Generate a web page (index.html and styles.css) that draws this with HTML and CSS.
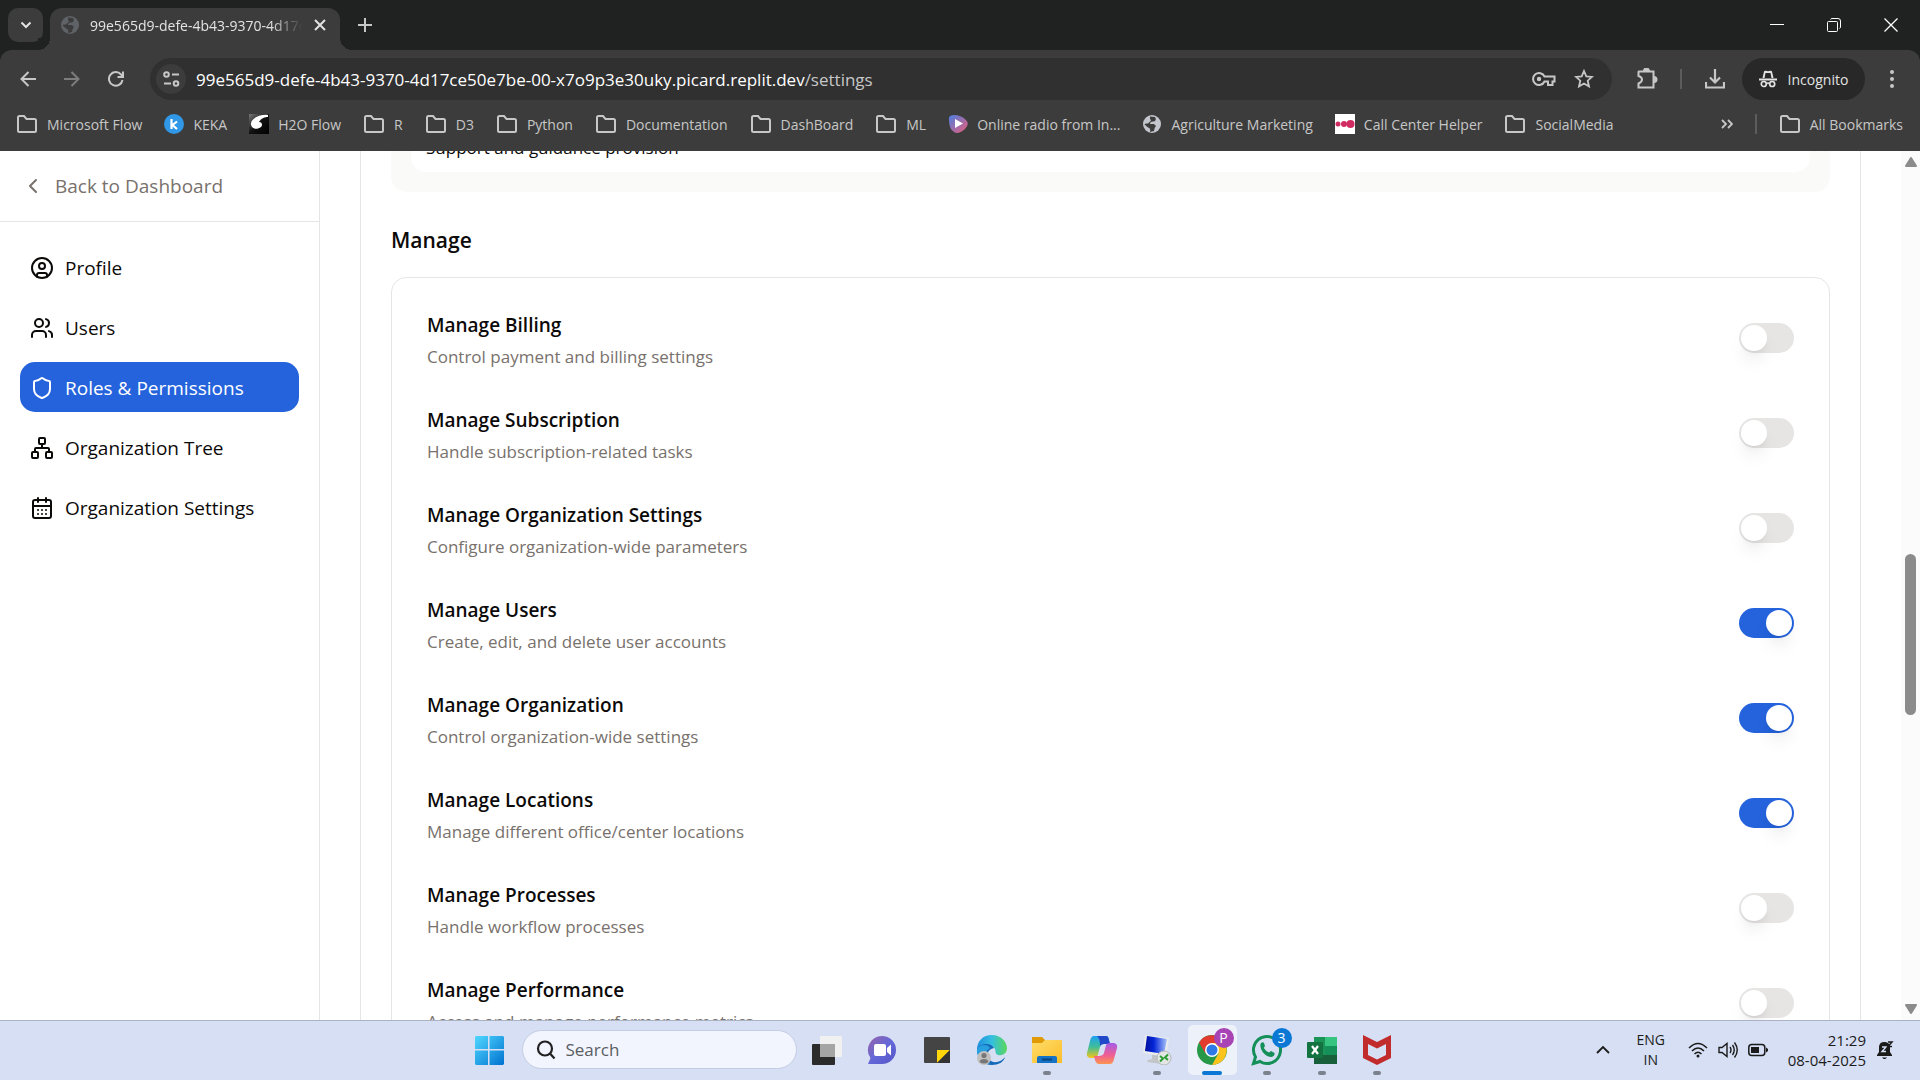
FILE: index.html
```html
<!DOCTYPE html>
<html lang="en">
<head>
<meta charset="utf-8">
<title>Settings</title>
<link rel="stylesheet" href="styles.css">
</head>
<body>
<svg class="defs" aria-hidden="true">
  <defs>
    <symbol id="folder" viewBox="0 0 22 20"><path d="M2 3.500Q2 2 3.500 2H8l2.500 3H18.500Q20 5 20 6.500V16.500Q20 18 18.500 18H3.500Q2 18 2 16.500Z" fill="none" stroke="currentColor" stroke-width="2"/></symbol>
    <symbol id="globe" viewBox="0 0 20 20"><circle cx="10" cy="10" r="9" fill="currentColor"/><path d="M8 2.500L13 3Q15 6 12 7.500Q8 7 8 10H12L14 12Q12 14 12 17L8 18Q9 14 6 13.500L2.500 10.500Q3 9 6 9.500L7.500 8Q10 6.500 8 5Z" fill="var(--land)"/></symbol>
    <linearGradient id="win" x1="0" y1="0" x2="1" y2="1"><stop offset="0" stop-color="#4fd8ff"/><stop offset="1" stop-color="#0072d0"/></linearGradient>
    <linearGradient id="radio" x1="0" y1="0" x2="1" y2="1"><stop offset="0" stop-color="#4a7ee0"/><stop offset="1" stop-color="#ee5d78"/></linearGradient>
    <linearGradient id="chat" x1="0" y1="0" x2="1" y2="1"><stop offset="0" stop-color="#9a63a8"/><stop offset=".5" stop-color="#6468d8"/><stop offset="1" stop-color="#5656c8"/></linearGradient>
    <linearGradient id="edgeTop" x1="0" y1="0" x2="1" y2="0"><stop offset="0" stop-color="#1e8fdc"/><stop offset=".5" stop-color="#35bfe0"/><stop offset="1" stop-color="#58d858"/></linearGradient>
    <linearGradient id="fold" x1="0" y1="0" x2="1" y2="1"><stop offset="0" stop-color="#ffdd6b"/><stop offset="1" stop-color="#fbbd28"/></linearGradient>
    <linearGradient id="copA" x1="0" y1="0" x2="0" y2="1"><stop offset="0" stop-color="#1fa0f0"/><stop offset=".5" stop-color="#3fbf98"/><stop offset="1" stop-color="#f5c518"/></linearGradient>
    <linearGradient id="copB" x1="0" y1="0" x2="0" y2="1"><stop offset="0" stop-color="#a45be8"/><stop offset=".6" stop-color="#f2608f"/><stop offset="1" stop-color="#fb9550"/></linearGradient>
    <linearGradient id="screen" x1="0" y1="0" x2="1" y2="0"><stop offset="0" stop-color="#0010a0"/><stop offset=".4" stop-color="#0526d8"/><stop offset="1" stop-color="#a9c4fb"/></linearGradient>
    <linearGradient id="swirl" x1="0" y1="0" x2="1" y2="1"><stop offset="0" stop-color="#777"/><stop offset=".5" stop-color="#111"/><stop offset="1" stop-color="#000"/></linearGradient>
  </defs>
</svg>

<header class="browser">
  <div class="tabstrip">
    <button class="tab-search" aria-label="Search tabs"><svg width="12" height="8" viewBox="0 0 12 8"><path d="M1.500 1.500L6 6L10.500 1.500" fill="none" stroke="currentColor" stroke-width="2"/></svg></button>
    <div class="tab">
      <svg class="tab-globe" width="20" height="20"><use href="#globe"/></svg>
      <span class="tab-title">99e565d9-defe-4b43-9370-4d17ce50e7be</span>
      <button class="tab-close" aria-label="Close tab"><svg width="12" height="12" viewBox="0 0 12 12"><path d="M1 1L11 11M11 1L1 11" stroke="currentColor" stroke-width="2"/></svg></button>
    </div>
    <button class="new-tab" aria-label="New tab"><svg width="14" height="14" viewBox="0 0 14 14"><path d="M7 0V14M0 7H14" stroke="currentColor" stroke-width="2"/></svg></button>
    <div class="window-controls">
      <button aria-label="Minimize"><svg width="14" height="14" viewBox="0 0 14 14"><path d="M0 6.500H14" stroke="currentColor"/></svg></button>
      <button aria-label="Restore"><svg width="14" height="14" viewBox="0 0 14 14" fill="none" stroke="currentColor"><rect x=".5" y="3.500" width="10" height="10" rx="1"/><path d="M3.500 1.500Q4 .5 5 .5H11Q13.500 .5 13.500 3V9Q13.500 10 12.500 10.500"/></svg></button>
      <button aria-label="Close"><svg width="14" height="14" viewBox="0 0 14 14"><path d="M.5 .5L13.500 13.500M13.500 .5L.5 13.500" stroke="currentColor" stroke-width="1.300"/></svg></button>
    </div>
  </div>

  <div class="toolbar">
    <div class="nav-buttons">
      <button aria-label="Back"><svg width="16" height="16" viewBox="0 0 16 16" fill="none" stroke="currentColor" stroke-width="2"><path d="M16 8H2M8.500 1L1.500 8L8.500 15"/></svg></button>
      <button class="dim" aria-label="Forward"><svg width="16" height="16" viewBox="0 0 16 16" fill="none" stroke="currentColor" stroke-width="2"><path d="M0 8H14M7.500 1L14.500 8L7.500 15"/></svg></button>
      <button aria-label="Reload"><svg width="16" height="16" viewBox="0 0 16 16" fill="none" stroke="currentColor" stroke-width="2"><path d="M14.500 9A6.800 6.800 0 1 1 13 3.500L15 6M15 .5V6H9.500"/></svg></button>
    </div>
    <div class="omnibox">
      <button class="site-info" aria-label="Site information"><svg width="17" height="16" viewBox="0 0 17 16" fill="none" stroke="currentColor" stroke-width="2"><circle cx="3.500" cy="3.500" r="2.300"/><path d="M9 3.500H16M1 12.500H8"/><circle cx="13" cy="12.500" r="2.300"/></svg></button>
      <div class="url"><span class="host">99e565d9-defe-4b43-9370-4d17ce50e7be-00-x7o9p3e30uky.picard.replit.dev</span>/settings</div>
      <button aria-label="Passwords"><svg width="24" height="16" viewBox="0 0 24 16" fill="none" stroke="currentColor" stroke-width="2"><path d="M12.500 5.500A6 6 0 1 0 12.500 10.500H16V14H20.500V10.500H22.500V5.500Z"/><circle cx="7" cy="8" r="2.200" fill="currentColor" stroke="none"/></svg></button>
      <button aria-label="Bookmark this page"><svg width="20" height="20" viewBox="0 0 20 20" fill="none" stroke="currentColor" stroke-width="1.800"><path d="M10 2L12.300 7.400L18 7.900L13.700 11.700L15 17.500L10 14.500L5 17.500L6.300 11.700L2 7.900L7.700 7.400Z"/></svg></button>
    </div>
    <div class="actions">
      <button aria-label="Extensions"><svg width="22" height="22" viewBox="0 0 22 22" fill="none" stroke="currentColor" stroke-width="2"><path d="M3 3.500H17.500V19.500H2.500V15.500Q6 14 6 11.500T2.500 8V4Z"/><path d="M8 3A2.500 2.500 0 0 1 13 3M18 9A2.500 2.500 0 0 1 18 14" fill="currentColor"/></svg></button>
      <span class="divider"></span>
      <button aria-label="Downloads"><svg width="20" height="20" viewBox="0 0 20 20" fill="none" stroke="currentColor" stroke-width="2.200"><path d="M10 0V13M5 8.500L10 13.500L15 8.500M1 13V18.500H19V13"/></svg></button>
      <button class="incognito"><svg width="18" height="18" viewBox="0 0 18 18"><path d="M0 8.500H18V10.500H0ZM3.500 8L5 1.500Q5.500 .3 7 .8L9 1.300L11 .8Q12.500 .3 13 1.500L14.500 8H12.500L11.500 3H6.500L5.500 8Z" fill="currentColor"/><g fill="none" stroke="currentColor" stroke-width="1.700"><circle cx="4.800" cy="14" r="2.500"/><circle cx="13.200" cy="14" r="2.500"/><path d="M7.500 13.500Q9 12.500 10.500 13.500"/></g></svg>Incognito</button>
      <button aria-label="Menu"><svg width="6" height="20" viewBox="0 0 6 20" fill="currentColor"><circle cx="3" cy="3" r="2"/><circle cx="3" cy="10" r="2"/><circle cx="3" cy="17" r="2"/></svg></button>
    </div>
  </div>

  <nav class="bookmarks" aria-label="Bookmarks">
    <a href="#"><svg width="22" height="20"><use href="#folder"/></svg>Microsoft Flow</a>
    <a href="#"><svg width="20" height="20" viewBox="0 0 20 20"><circle cx="10" cy="10" r="10" fill="#3098e6"/><path d="M7.500 5V15M13 7.500L8.500 11L13 15" fill="none" stroke="#fff" stroke-width="2.200"/></svg>KEKA</a>
    <a href="#"><svg width="20" height="20" viewBox="0 0 20 20"><rect width="20" height="20" fill="url(#swirl)"/><path d="M19 1C10 0 1 5 2 11C3 15 8 16 12 13C14 11 13 8 10 8C12 4 16 3 19 3Z" fill="#fff"/></svg>H2O Flow</a>
    <a href="#"><svg width="22" height="20"><use href="#folder"/></svg>R</a>
    <a href="#"><svg width="22" height="20"><use href="#folder"/></svg>D3</a>
    <a href="#"><svg width="22" height="20"><use href="#folder"/></svg>Python</a>
    <a href="#"><svg width="22" height="20"><use href="#folder"/></svg>Documentation</a>
    <a href="#"><svg width="22" height="20"><use href="#folder"/></svg>DashBoard</a>
    <a href="#"><svg width="22" height="20"><use href="#folder"/></svg>ML</a>
    <a href="#"><svg width="20" height="20" viewBox="0 0 20 20"><path d="M1 6Q0 1 6 1Q13 1 18 6Q22 10 17 15Q10 21 6 18Q1 15 1 6Z" fill="url(#radio)"/><path d="M7 5L15 9.500L7 14Z" fill="#fff"/></svg>Online radio from In...</a>
    <a href="#"><svg class="page-globe" width="20" height="20"><use href="#globe"/></svg>Agriculture Marketing</a>
    <a href="#"><svg width="20" height="20" viewBox="0 0 20 20"><rect width="20" height="20" fill="#fff"/><g fill="#d12c62"><circle cx="3" cy="10" r="2.500"/><circle cx="9" cy="10" r="3"/><circle cx="15.500" cy="10" r="4"/></g></svg>Call Center Helper</a>
    <a href="#"><svg width="22" height="20"><use href="#folder"/></svg>SocialMedia</a>
    <button class="overflow" aria-label="More bookmarks"><svg width="12" height="10" viewBox="0 0 12 10" fill="none" stroke="currentColor" stroke-width="1.800"><path d="M1 1L5 5L1 9M7 1L11 5L7 9"/></svg></button>
    <span class="divider"></span>
    <a href="#"><svg width="22" height="20"><use href="#folder"/></svg>All Bookmarks</a>
  </nav>
</header>

<div class="page">
  <aside class="sidebar">
    <a class="back" href="#"><svg width="24" height="24" viewBox="0 0 24 24"><path d="M15 18L9 12L15 6"/></svg>Back to Dashboard</a>
    <nav class="side-nav" aria-label="Settings">
      <a href="#"><svg width="24" height="24" viewBox="0 0 24 24"><circle cx="12" cy="12" r="10"/><circle cx="12" cy="10" r="3"/><path d="M7 20.662V19a2 2 0 0 1 2-2h6a2 2 0 0 1 2 2v1.662"/></svg>Profile</a>
      <a href="#"><svg width="24" height="24" viewBox="0 0 24 24"><path d="M16 21v-2a4 4 0 0 0-4-4H6a4 4 0 0 0-4 4v2"/><circle cx="9" cy="7" r="4"/><path d="M22 21v-2a4 4 0 0 0-3-3.870M16 3.130a4 4 0 0 1 0 7.750"/></svg>Users</a>
      <a class="active" href="#" aria-current="page"><svg width="24" height="24" viewBox="0 0 24 24"><path d="M20 13c0 5-3.500 7.500-7.660 8.950a1 1 0 0 1-.67-.01C7.500 20.500 4 18 4 13V6a1 1 0 0 1 1-1c2 0 4.500-1.200 6.240-2.720a1.170 1.170 0 0 1 1.520 0C14.510 3.810 17 5 19 5a1 1 0 0 1 1 1z"/></svg>Roles &amp; Permissions</a>
      <a href="#"><svg width="24" height="24" viewBox="0 0 24 24"><rect x="16" y="16" width="6" height="6" rx="1"/><rect x="2" y="16" width="6" height="6" rx="1"/><rect x="9" y="2" width="6" height="6" rx="1"/><path d="M5 16v-3a1 1 0 0 1 1-1h12a1 1 0 0 1 1 1v3M12 12V8"/></svg>Organization Tree</a>
      <a href="#"><svg width="24" height="24" viewBox="0 0 24 24"><path d="M8 2v4M16 2v4"/><rect width="18" height="18" x="3" y="4" rx="2"/><path d="M3 10h18M8 14h.01M12 14h.01M16 14h.01M8 18h.01M12 18h.01M16 18h.01"/></svg>Organization Settings</a>
    </nav>
  </aside>

  <main class="main">
    <div class="panel">
      <div class="muted-box"><p class="muted-item">Support and guidance provision</p></div>
      <h2>Manage</h2>
      <div class="card">
        <div class="row"><div><label for="p1">Manage Billing</label><p>Control payment and billing settings</p></div><input type="checkbox" role="switch" id="p1"></div>
        <div class="row"><div><label for="p2">Manage Subscription</label><p>Handle subscription-related tasks</p></div><input type="checkbox" role="switch" id="p2"></div>
        <div class="row"><div><label for="p3">Manage Organization Settings</label><p>Configure organization-wide parameters</p></div><input type="checkbox" role="switch" id="p3"></div>
        <div class="row"><div><label for="p4">Manage Users</label><p>Create, edit, and delete user accounts</p></div><input type="checkbox" role="switch" id="p4" checked></div>
        <div class="row"><div><label for="p5">Manage Organization</label><p>Control organization-wide settings</p></div><input type="checkbox" role="switch" id="p5" checked></div>
        <div class="row"><div><label for="p6">Manage Locations</label><p>Manage different office/center locations</p></div><input type="checkbox" role="switch" id="p6" checked></div>
        <div class="row"><div><label for="p7">Manage Processes</label><p>Handle workflow processes</p></div><input type="checkbox" role="switch" id="p7"></div>
        <div class="row"><div><label for="p8">Manage Performance</label><p>Access and manage performance metrics</p></div><input type="checkbox" role="switch" id="p8"></div>
      </div>
    </div>
  </main>

  <div class="scrollbar" aria-hidden="true">
    <svg width="12" height="10" viewBox="0 0 12 10"><path d="M6 1L11 9H1Z"/></svg>
    <span class="rail-before"></span><span class="thumb"></span><span class="rail-after"></span>
    <svg width="12" height="10" viewBox="0 0 12 10"><path d="M6 9L1 1H11Z"/></svg>
  </div>
</div>

<footer class="taskbar">
  <div class="apps">
    <button aria-label="Start"><svg width="30" height="30" viewBox="0 0 30 30"><path d="M2 1H14V14H1V2ZM15.500 1H29L30 2V14H15.500ZM1 15.500H14V30H2L1 29ZM15.500 15.500H30V29L29 30H15.500Z" fill="url(#win)"/></svg></button>
    <label class="search"><svg width="20" height="20" viewBox="0 0 20 20" fill="none" stroke="#222" stroke-width="2.200"><circle cx="9" cy="8.500" r="7"/><path d="M14 13.500L18.500 18.500"/></svg><input type="text" placeholder="Search" aria-label="Search"></label>
    <button aria-label="Task view"><svg width="32" height="30" viewBox="0 0 32 30"><rect x="1" y="9" width="23" height="21" rx="1" fill="#2b2b2b"/><rect x="9" y="1" width="22" height="21" rx="1" fill="#f1f1f1"/><path d="M9 9H24V22H9Z" fill="#a5a5a5"/></svg></button>
    <button aria-label="Chat"><svg width="30" height="30" viewBox="0 0 30 30"><path d="M15 1A14 14 0 1 1 15 29H1L3.500 23A14 14 0 0 1 15 1Z" fill="url(#chat)"/><rect x="7" y="9" width="12" height="12" rx="2" fill="#fff"/><path d="M20 13L24 9.500V20.500L20 17Z" fill="#fff"/></svg></button>
    <button aria-label="Sticky Notes"><svg width="26" height="26" viewBox="0 0 26 26"><rect width="26" height="26" rx="1" fill="#444"/><path d="M13 13H26L13 26Z" fill="#ffd60a"/><path d="M26 13L13 26H26Z" fill="#333"/></svg></button>
    <button aria-label="Edge"><svg width="32" height="32" viewBox="0 0 32 32"><path d="M1 16C1 7 7 1 16 1C25 1 31 8 31 14C31 19 27 22 22 21C19 20 20 18 19 15C16 9 4 10 1 16Z" fill="url(#edgeTop)"/><path d="M1 15C4 9 15 8 18 14C11 15 9 23 15 27C20 30 26 27 29 23C28 28 22 31 16 31C7 31 1 24 1 15Z" fill="#1568b8"/><path d="M1 15C4 10 12 10 14 14C8 18 7 25 14 30C6 29 0 23 1 15Z" fill="#28a0e0"/><circle cx="8" cy="24" r="7" fill="#c2c0bf"/><circle cx="8" cy="21.500" r="2.600" fill="#777"/><path d="M3.500 28Q4 25 8 25T12.500 28Q8 31 3.500 28Z" fill="#777"/></svg></button>
    <button class="open" aria-label="File Explorer"><svg width="30" height="28" viewBox="0 0 30 28"><path d="M0 1H10L13 4V10H0Z" fill="#e09a08"/><path d="M0 7H10L13 4H29Q30 4 30 5V27H0Z" fill="url(#fold)"/><path d="M5 27V22Q5 20 7 20H23Q25 20 25 22V27Z" fill="#1572c4"/><path d="M10 23.500H20" stroke="#0a4580" stroke-width="2"/></svg></button>
    <button aria-label="Copilot"><svg width="32" height="30" viewBox="0 0 32 30"><path d="M8 1H20Q22 1 22.500 3L24 9H18Q15 9 14 12L11.500 21Q11 23 8 23H4Q0 22 1 18L4 6Q5 1 8 1Z" fill="url(#copA)"/><path d="M11 1H20Q22 1 22.500 3L24 9H18Q15 9 14 11Q14 3 11 1Z" fill="#2048c8"/><path d="M24 29H13Q10 29 9 25L8 21H13Q17 21 18 18L20 10Q21 8 24 8H28Q32 9 31 13L28 24Q27 29 24 29Z" fill="url(#copB)"/></svg></button>
    <button class="open" aria-label="Remote Desktop"><svg width="30" height="30" viewBox="0 0 30 30"><path d="M10 19L17 21L18 26L20 29L5 27L6 25L10 24Z" fill="#c3c5c9"/><path d="M3 0L27 3L24 22L1 18Z" fill="#e9ebee"/><path d="M5 1L25 4L22 19L3 16Z" fill="url(#screen)"/><circle cx="22" cy="23" r="7" fill="#e4e6e4" stroke="#b5b7b8"/><path d="M18 21L21 23.500L18 26.500M26 19.500L23 22.500L26 25" fill="none" stroke="#2c9d35" stroke-width="2"/></svg></button>
    <button class="open current" aria-label="Chrome"><svg width="30" height="30" viewBox="0 0 30 30"><circle cx="15" cy="15" r="15" fill="#279847"/><path d="M15 8H28A15 15 0 0 1 15 30L21.500 18.500Z" fill="#fcc31e"/><path d="M2 7.500A15 15 0 0 1 28 8H15L9 11.500L8.500 18.500Z" fill="#e33b2e"/><circle cx="15" cy="15" r="7" fill="#fff"/><circle cx="15" cy="15" r="5.500" fill="#2f78e8"/></svg><span class="badge purple">P</span></button>
    <button class="open" aria-label="WhatsApp"><svg width="32" height="32" viewBox="0 0 32 32"><path d="M4.500 23A13.500 13.500 0 1 1 9 27.500L2.500 29.500Z" fill="none" stroke="#158f58" stroke-width="3"/><path d="M10 9Q12 7.500 13 9L14 12L12.800 14Q14.500 17 18 18.500L20 17L23.500 19Q24 22 20.500 23Q16 23 12 18.500Q8 13 10 9Z" fill="#158f58"/></svg><span class="badge blue">3</span></button>
    <button class="open" aria-label="Excel"><svg width="30" height="28" viewBox="0 0 30 28"><path d="M7 1H18V28H7Z" fill="#1b9458"/><path d="M18 1H30V10H18Z" fill="#37c481"/><path d="M18 10H30V19H18Z" fill="#159059"/><path d="M7 19H30V28H7Z" fill="#18603b"/><rect y="6" width="16" height="16" rx="1" fill="#127240"/><path d="M5 10L11 18M11 10L5 18" stroke="#fff" stroke-width="2.200"/></svg></button>
    <button class="open" aria-label="McAfee"><svg width="28" height="30" viewBox="0 0 28 30"><path d="M0 0L14 7L28 0V23L14 30L0 23ZM5 9V20L14 24.500L23 20V9L14 13.500Z" fill="#c12b2c" fill-rule="evenodd"/></svg></button>
  </div>
  <div class="tray">
    <button aria-label="Show hidden icons"><svg width="14" height="9" viewBox="0 0 14 9"><path d="M1 8L7 2L13 8" fill="none" stroke="currentColor" stroke-width="1.800"/></svg></button>
    <button class="lang"><span>ENG</span><span>IN</span></button>
    <button class="status" aria-label="Network, volume and battery">
      <svg width="20" height="16" viewBox="0 0 20 16" fill="none" stroke="currentColor" stroke-width="1.500"><path d="M1 6Q10 -3 19 6M4 9Q10 3 16 9M6.500 12Q10 8.500 13.500 12"/><circle cx="10" cy="14" r="1.500" fill="currentColor" stroke="none"/></svg>
      <svg width="20" height="16" viewBox="0 0 20 16" fill="none" stroke="currentColor" stroke-width="1.400"><path d="M1 5.500H4L9 1.500V14.500L4 10.500H1ZM12 5Q14 8 12 11M14.500 3Q18 8 14.500 13M16.500 .5Q22 8 16.500 15.500"/></svg>
      <svg width="20" height="14" viewBox="0 0 20 14"><rect x=".8" y="1.500" width="16" height="11" rx="3" fill="none" stroke="currentColor" stroke-width="1.500"/><rect x="3" y="4" width="8" height="6" fill="currentColor"/><path d="M18 4.500L20 6V8L18 9.500Z" fill="currentColor"/></svg>
    </button>
    <button class="clock"><span>21:29</span><span>08-04-2025</span></button>
    <button aria-label="Notifications"><svg width="18" height="20" viewBox="0 0 18 20"><path d="M8 2C4 2 3 5 3 8V12L1 15V16H16V15L14 12V8C14 4 12 2 8 2ZM6 17.500Q8.500 20.500 11 17.500Z" fill="currentColor"/><path d="M6 7H10L6 11.500H10" fill="none" stroke="#d5e1f7" stroke-width="1.400"/><path d="M12 2H16L12 6.500H16" fill="none" stroke="currentColor" stroke-width="1.500"/></svg></button>
  </div>
</footer>
</body>
</html>
```
FILE: styles.css
```css
* { box-sizing: border-box; }

body {
  margin: 0;
  height: 100vh;
  display: flex;
  flex-direction: column;
  overflow: hidden;
  background: #fff;
  color: #0c0a09;
  font-family: "Open Sans", "Noto Sans", sans-serif;
  font-size: 19px;
}

.defs { position: absolute; width: 0; height: 0; }
svg { flex: none; display: block; }
a { color: inherit; text-decoration: none; }
p, h2 { margin: 0; }
button {
  display: flex;
  align-items: center;
  justify-content: center;
  padding: 0;
  border: 0;
  background: none;
  color: inherit;
  font: inherit;
}

/* Browser window */
.browser { flex: none; background: #202222; color: #c7c7c7; font-size: 14px; }
.tabstrip { display: flex; height: 50px; padding: 8px 1px 0 8px; }
.tab-search { width: 35px; height: 34px; border-radius: 10px; background: #3c3c3c; color: #e3e3e3; }
.tab {
  position: relative;
  display: flex;
  align-items: center;
  gap: 10px;
  width: 290px;
  margin-left: 7px;
  padding: 0 12px 8px 10px;
  border-radius: 12px 12px 0 0;
  background: #3c3c3c;
  color: #e3e3e3;
}
.tab::before, .tab::after {
  content: "";
  position: absolute;
  bottom: 0;
  width: 12px;
  height: 12px;
}
.tab::before { right: 100%; background: radial-gradient(circle at 0 0, #202222 12px, #3c3c3c 12px); }
.tab::after { left: 100%; background: radial-gradient(circle at 100% 0, #202222 12px, #3c3c3c 12px); }
.tab-globe { color: #5f6368; --land: #3c3c3c; }
.page-globe { color: #c3c6cc; --land: #3c3c3c; }
.tab-title {
  flex: 1;
  overflow: hidden;
  white-space: nowrap;
  mask-image: linear-gradient(to right, #000 85%, transparent);
}
.tab-close { width: 16px; height: 20px; }
.new-tab { width: 34px; height: 34px; margin-left: 8px; }
.window-controls { display: flex; margin: -8px 0 0 auto; color: #fff; }
.window-controls button { width: 57px; height: 50px; }

.toolbar {
  display: flex;
  align-items: center;
  height: 58px;
  padding: 0 17px 0 6px;
  border-radius: 12px 12px 0 0;
  background: #3c3c3c;
}
.nav-buttons { display: flex; width: 144px; }
.nav-buttons button { width: 44px; height: 40px; }
.dim { color: #7d7d7d; }
.omnibox {
  display: flex;
  flex: 1;
  align-items: center;
  gap: 18px;
  height: 42px;
  padding: 0 18px 0 6px;
  border-radius: 21px;
  background: #303030;
}
.site-info { width: 30px; height: 30px; border-radius: 15px; background: #3c3c3c; }
.url { flex: 1; margin-left: -8px; font-size: 17px; white-space: nowrap; }
.host { color: #fff; }
.actions { display: flex; align-items: center; gap: 22px; padding-left: 24px; }
.divider { width: 2px; height: 20px; background: #5c5c5c; }
.actions > button { min-width: 22px; }
.incognito {
  gap: 11px;
  width: 123px;
  height: 42px;
  margin: 0 -6px;
  border-radius: 21px;
  background: #282828;
  color: #e3e3e3;
}

.bookmarks {
  display: flex;
  align-items: center;
  gap: 22px;
  height: 43px;
  padding: 0 17px 11px 16px;
  background: #3c3c3c;
  white-space: nowrap;
}
.bookmarks a { display: flex; align-items: center; gap: 9px; }
.overflow { margin-left: auto; }

/* Settings page */
.page { display: flex; flex: 1; min-height: 0; overflow: hidden; }
.sidebar { flex: none; width: 320px; border-right: 1px solid #e5e5e5; }
.sidebar svg {
  fill: none;
  stroke: currentColor;
  stroke-width: 2;
  stroke-linecap: round;
  stroke-linejoin: round;
}
.back {
  display: flex;
  align-items: center;
  gap: 10px;
  height: 71px;
  padding: 0 21px;
  border-bottom: 1px solid #e5e5e5;
  color: #78716c;
}
.side-nav { display: flex; flex-direction: column; gap: 10px; padding: 20px; }
.side-nav a {
  display: flex;
  align-items: center;
  gap: 11px;
  height: 50px;
  padding: 1px 10px 0;
  border-radius: 15px;
}
.side-nav .active { background: #2563dc; color: #fff; }

.main { flex: 1; padding: 0 40px; overflow: hidden; }
.panel { margin-top: -40px; padding: 0 30px; border: solid #e5e5e5; border-width: 0 1px; }
.muted-box { padding: 0 20px 20px; border-radius: 15px; background: #fafaf9; }
.muted-item { padding: 26px 15px 13px; border-radius: 15px; background: #fff; font-size: 17px; line-height: 22px; }
h2 { padding: 33px 0 22px; font-size: 21px; font-weight: 600; line-height: 30px; }
.card {
  display: flex;
  flex-direction: column;
  gap: 33px;
  padding: 29px 35px;
  border: 1px solid #e5e5e5;
  border-radius: 15px;
}
.row { display: flex; align-items: center; justify-content: space-between; height: 62px; }
.row label { display: block; margin-bottom: 2px; font-weight: 600; line-height: 36px; }
.row p { color: #78716c; font-size: 17px; line-height: 24px; }
.row input {
  appearance: none;
  flex: none;
  width: 55px;
  height: 30px;
  margin: 0;
  padding: 2px;
  border-radius: 15px;
  background: #e7e5e4;
}
.row input::before {
  content: "";
  display: block;
  width: 26px;
  height: 26px;
  border-radius: 13px;
  background: #fff;
  box-shadow: 0 12px 18px -4px rgb(0 0 0 / 10%), 0 5px 8px -5px rgb(0 0 0 / 10%);
}
.row input:checked { background: #2563dc; }
.row input:checked::before { margin-left: auto; }

.scrollbar {
  display: flex;
  flex: none;
  flex-direction: column;
  align-items: center;
  width: 19px;
  padding: 6px 0;
  background: #fbfbfb;
  fill: #8b8b8b;
}
.scrollbar path { stroke: #8b8b8b; stroke-width: 2; stroke-linejoin: round; }
.rail-before { flex: 387; }
.thumb { flex: 160; width: 11px; border-radius: 6px; background: #8b8b8b; }
.rail-after { flex: 289; }

/* Taskbar */
.taskbar {
  display: grid;
  grid-template-columns: 1fr auto 1fr;
  flex: none;
  height: 60px;
  padding-bottom: 2px;
  border-top: 1px solid #a9b3c4;
  background: #d6dff4;
  color: #1b1b1b;
  font-size: 14px;
}
.apps { grid-column: 2; display: flex; align-items: center; padding-right: 54px; }
.apps button { position: relative; width: 55px; height: 50px; }
.search {
  display: flex;
  align-items: center;
  gap: 10px;
  width: 275px;
  height: 39px;
  margin: 0 3px 0 5px;
  padding: 0 13px;
  border: 1px solid #c3cde3;
  border-radius: 20px;
  background: #f2f5fd;
}
.search input { flex: 1; min-width: 0; padding: 0; border: 0; background: none; font: inherit; font-size: 17px; }
.search input::placeholder { color: #5a5d63; opacity: 1; }
.open::after {
  content: "";
  position: absolute;
  bottom: 0;
  left: 50%;
  width: 8px;
  height: 4px;
  margin-left: -4px;
  border-radius: 2px;
  background: #7b818d;
}
.apps .current { width: 49px; margin: 0 3px; border-radius: 5px; background: #edf1fa; }
.current::after { width: 20px; margin-left: -10px; background: #0a78d4; }
.badge {
  position: absolute;
  top: 3px;
  right: 3px;
  width: 20px;
  height: 20px;
  border-radius: 10px;
  color: #fff;
  line-height: 20px;
  text-align: center;
}
.purple { background: #a743b5; }
.blue { background: #0a78d4; }
.tray { display: flex; align-items: center; justify-content: flex-end; gap: 18px; padding-right: 26px; }
.lang, .clock { flex-direction: column; line-height: 20px; }
.lang { width: 46px; }
.status { gap: 10px; margin-left: -4px; }
.clock { align-items: flex-end; margin: 0 -8px 0 2px; font-size: 15px; line-height: 20px; }
```
